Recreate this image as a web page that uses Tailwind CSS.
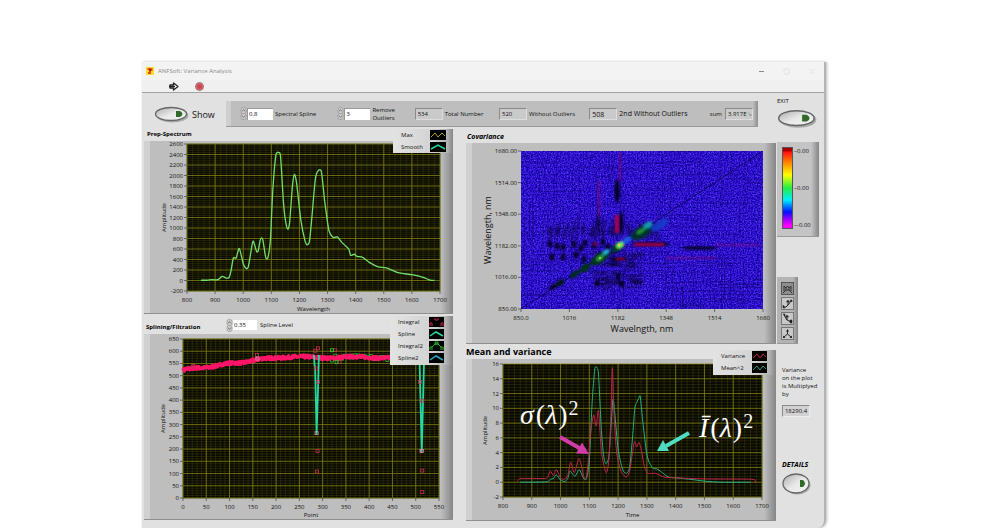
<!DOCTYPE html>
<html lang="en">
<head>
  <meta charset="UTF-8" />
  <title>ANFSoft: Variance Analysis</title>
  <script src="https://cdn.jsdelivr.net/npm/@tailwindcss/browser@4"></script>
</head>
<body class="bg-white min-h-screen pt-[62px] font-['Open_Sans',sans-serif] text-[6px] leading-[8px] font-medium text-[#111]">
  <div class="w-[68.4%] ml-[14.2%] bg-[#e1e1e1] border-r-2 border-[#b4b4b4] rounded-br-lg shadow-[1px_0_3px_#bbb]">
    <!-- Title bar -->
    <header class="bg-[#f3f3f3]">
      <div class="h-[18px] flex items-center pl-1 pr-[9px] gap-1">
        <svg class="w-2 h-2" viewBox="0 0 8 8"><rect width="8" height="8" fill="#f8e02a" /><path d="M1.500 1h5v3H5v3H2V5h1V3H1.500z" fill="#e8481c" /><path d="M3 2h2v2H3z" fill="#b01c10" /></svg>
        <h1 class="flex-1 text-[#8a8a8a]">ANFSoft: Variance Analysis</h1>
        <div class="flex gap-[18px]">
          <button aria-label="Minimize"><svg class="w-[7px] h-[7px]" viewBox="0 0 7 7"><path d="M1 3.500h5" stroke="#888" /></svg></button>
          <button aria-label="Maximize"><svg class="w-[7px] h-[7px]" viewBox="0 0 7 7"><rect x="1" y="1" width="5" height="5" rx="1" fill="none" stroke="#e2e2e2" /></svg></button>
          <button aria-label="Close"><svg class="w-[7px] h-[7px]" viewBox="0 0 7 7"><path d="M1 1l5 5M6 1L1 6" stroke="#e2e2e2" /></svg></button>
        </div>
      </div>
      <div class="h-[13px] flex items-center pl-[27px] gap-4 bg-[#f0f0f0] border-b border-[#a2a2a2]">
        <button aria-label="Run"><svg class="w-[10px] h-[9px]" viewBox="0 0 10 9"><path d="M1 3h3.500V1L9 4.500L4.500 8V6H1z" fill="#fff" stroke="#222" stroke-width="1.300" stroke-linejoin="round" /><path d="M0 4.500h6" stroke="#222" stroke-width="1.500" /></svg></button>
        <button aria-label="Abort"><svg class="w-[9px] h-[9px]" viewBox="0 0 9 9"><circle cx="4.500" cy="4.500" r="4.300" fill="#8e5358" /><circle cx="4.500" cy="4.500" r="3.200" fill="#cf4650" stroke="#e0aaae" stroke-width=".5" /></svg></button>
      </div>
    </header>

    <!-- Controls -->
    <div class="h-9 flex items-start pl-3">
      <label class="w-[72px] mt-[13px] flex items-center gap-[3px] text-[9px] font-normal">
        <button class="w-[35px]" aria-label="Show"><svg class="w-full h-auto" viewBox="0 0 35 17"><use href="#oval" /></svg></button>
        Show
      </label>
      <div class="flex-1 mt-2 h-[26px] grid grid-cols-[97fr_77fr_84fr_90fr_120fr_48fr] items-center pl-[14px] bg-[linear-gradient(90deg,#cfcfcf_0_5px,#bebebe_5px_calc(100%-5px),#8c8c8c)] border-b border-[#999]">
        <label class="flex items-center gap-[2px]">
          <span class="flex items-center"><svg class="w-[7px] h-[13px]" viewBox="0 0 7 13"><use href="#spin" /></svg><input class="w-[26px] h-3 bg-white border-t border-l border-[#999] text-[6px] pl-px" value="0.8" /></span>
          Spectral Spline
        </label>
        <label class="flex items-center gap-[2px]">
          <span class="flex items-center"><svg class="w-[7px] h-[13px]" viewBox="0 0 7 13"><use href="#spin" /></svg><input class="w-[26px] h-3 bg-white border-t border-l border-[#999] text-[6px] pl-px" value="3" /></span>
          <span>Remove<br />Outliers</span>
        </label>
        <label class="flex items-center gap-[2px]"><output class="w-7 h-3 pl-[2px] leading-[11px] bg-[#cacaca] border border-t-[#8a8a8a] border-l-[#8a8a8a] border-[#ddd]">534</output>Total Number</label>
        <label class="flex items-center gap-[2px]"><output class="w-7 h-3 pl-[2px] leading-[11px] bg-[#cacaca] border border-t-[#8a8a8a] border-l-[#8a8a8a] border-[#ddd]">520</output>Without Outliers</label>
        <label class="flex items-center gap-[2px] text-[7px] font-normal"><output class="w-7 h-3 pl-[2px] leading-[11px] bg-[#cacaca] border border-t-[#8a8a8a] border-l-[#8a8a8a] border-[#ddd]">508</output>2nd Without Outliers</label>
        <label class="flex items-center gap-[3px]">sum<output class="w-7 h-3 pl-[2px] leading-[11px] overflow-hidden whitespace-nowrap bg-[#cacaca] border border-t-[#8a8a8a] border-l-[#8a8a8a] border-[#ddd]">3.917E<span class="text-[#777]">↘</span></output></label>
      </div>
      <label class="w-[66px] pl-[19px] pt-1">
        EXIT
        <button class="block w-[40px] mt-1" aria-label="Exit"><svg class="w-full h-auto" viewBox="0 0 35 17"><use href="#oval" /></svg></button>
      </label>
    </div>

    <main class="grid grid-cols-[322fr_311fr_47fr] pl-[2px] pb-[7px]">
      <!-- Left charts -->
      <div class="pr-[13px]">
        <section class="relative">
          <h2 class="h-3 pl-[3px] pt-px font-bold text-black">Prep-Spectrum</h2>
          <svg id="spectrum" class="block w-full h-auto bg-[linear-gradient(90deg,#d0d0d0_0_6px,#bebebe_6px_calc(100%-12px),#858585)] border-b border-[#909090]" viewBox="0 0 309 172"></svg>
          <ul class="absolute top-0 right-0 w-[60px] h-6 pl-2 pr-[7px] bg-[linear-gradient(90deg,#e3e3e3,#d2d2d2_40px,#b4b4b4_54px,#858585)]">
            <li class="h-3 flex items-center justify-between">Max<svg class="w-4 h-[10px] bg-black" viewBox="0 0 16 10"><path d="M1 7l4-4l3 4l4-4l3 3" fill="none" stroke="#b5a520" /></svg></li>
            <li class="h-3 flex items-center justify-between">Smooth<svg class="w-4 h-[10px] bg-black" viewBox="0 0 16 10"><path d="M1 7L8 3l7 4" fill="none" stroke="#25d8a4" stroke-width="1.500" /></svg></li>
          </ul>
        </section>
        <section class="relative pt-[2px]">
          <div class="h-[18px] flex items-center">
            <h2 class="w-[82px] pl-[2px] pt-1 font-bold text-black">Splining/Filtration</h2>
            <label class="flex items-center gap-[3px]">
              <span class="flex items-center"><svg class="w-[7px] h-[13px]" viewBox="0 0 7 13"><use href="#spin" /></svg><input class="w-6 h-[10px] bg-white text-[6px] pl-px" value="0.35" /></span>
              Spline Level
            </label>
          </div>
          <svg id="filtration" class="block w-full h-auto bg-[linear-gradient(90deg,#d0d0d0_0_6px,#bebebe_6px_calc(100%-12px),#858585)] border-b border-[#909090]" viewBox="0 0 309 185"></svg>
          <ul class="absolute top-[2px] right-0 w-[63px] h-[49px] pl-2 pr-[9px] bg-[linear-gradient(90deg,#e3e3e3,#d2d2d2_42px,#b4b4b4_56px,#858585)]">
            <li class="h-3 flex items-center justify-between">Integral<svg class="w-[15px] h-[10px] bg-black" viewBox="0 0 15 10"><path d="M1 9V6h2v3M6 1v2h3V1M12 9V6h2v3" fill="none" stroke="#d0224c" /></svg></li>
            <li class="h-3 flex items-center justify-between">Spline<svg class="w-[15px] h-[10px] bg-black" viewBox="0 0 15 10"><path d="M1 7l6-4l7 4" fill="none" stroke="#25d8a4" stroke-width="1.500" /></svg></li>
            <li class="h-3 flex items-center justify-between">Integral2<svg class="w-[15px] h-[10px] bg-black" viewBox="0 0 15 10"><path d="M1 9V6h2v3M3 6l3-3h3l3 3M6 1v2h3V1zM12 9V6h2v3" fill="none" stroke="#24b824" /></svg></li>
            <li class="h-3 flex items-center justify-between">Spline2<svg class="w-[15px] h-[10px] bg-black" viewBox="0 0 15 10"><path d="M1 7l6-4l7 4" fill="none" stroke="#2fa8c8" stroke-width="1.500" /></svg></li>
          </ul>
        </section>
      </div>

      <!-- Right charts -->
      <div class="pr-px">
        <section>
          <h2 class="h-[14px] pl-px pt-1 text-[7px] font-bold italic text-black">Covariance</h2>
          <svg id="covariance" class="block w-full h-auto bg-[linear-gradient(90deg,#d0d0d0_0_6px,#bebebe_6px_calc(100%-12px),#858585)] border-b border-[#909090]" viewBox="0 0 310 200"></svg>
        </section>
        <section class="relative">
          <h2 class="h-[15px] pt-1 text-[9px] font-bold text-black">Mean and variance</h2>
          <svg id="variance" class="block w-full h-auto bg-[linear-gradient(90deg,#d0d0d0_0_6px,#bebebe_6px_calc(100%-12px),#858585)] border-b border-[#909090]" viewBox="0 0 310 161"></svg>
          <ul class="absolute top-[6px] right-0 w-[63px] h-[25px] pl-2 pr-[9px] bg-[linear-gradient(90deg,#e3e3e3,#d2d2d2_42px,#b4b4b4_56px,#858585)]">
            <li class="h-3 flex items-center justify-between">Variance<svg class="w-[15px] h-[10px] bg-black" viewBox="0 0 15 10"><path d="M1 7l4-4l3 4l3-4l3 3" fill="none" stroke="#b82048" /></svg></li>
            <li class="h-3 flex items-center justify-between">Mean^2<svg class="w-[15px] h-[10px] bg-black" viewBox="0 0 15 10"><path d="M1 7l4-4l3 4l3-4l3 3" fill="none" stroke="#1f9c80" /></svg></li>
          </ul>
        </section>
      </div>

      <!-- Side tools -->
      <aside class="pt-[13px]">
        <div class="w-[42px] h-[95px] pl-[5px] pt-[5px] flex gap-px bg-[linear-gradient(90deg,#c4c4c4_0_34px,#858585)] border-b border-[#999]">
          <div class="w-[11px] h-[82px] border border-[#555] bg-[linear-gradient(180deg,#a00_0_3px,#f11_4px,#f80_15px,#ff0_27px,#2e4_40px,#0ef_52px,#01f_64px,#a0f_72px,#f0f_78px)]"></div>
          <div class="h-[82px] flex flex-col justify-between whitespace-nowrap"><span>–0.00</span><span>–0.00</span><span>–-0.00</span></div>
        </div>
        <div class="w-[21px] h-[67px] mt-10 pl-1 pt-[5px] flex flex-col gap-[2px] bg-[linear-gradient(90deg,#b4b4b4_0_16px,#858585)] border-b border-[#999]">
          <button class="size-[13px] border border-[#555] bg-[#8e8e8e]" aria-label="Perspective view"><svg viewBox="0 0 11 11"><path d="M1 10l3-3h3l3 3M2 8V3l2 2l1.500-2L7 5l2-2v5M4 7V5M7 7V5" fill="none" stroke="#2a2a2a" stroke-width=".9" /></svg></button>
          <button class="size-[13px] border border-[#777] bg-[#c8c8c8]" aria-label="XZ view"><svg viewBox="0 0 11 11"><path d="M1 9h3l2-2V3M4 9l2-2l3-4" fill="none" stroke="#222" /><path d="M4.500 4L6 2l1.500 2zM1 7v3h2zM8 2h2v2z" fill="#222" stroke="#222" stroke-width=".5" /></svg></button>
          <button class="size-[13px] border border-[#777] bg-[#c8c8c8]" aria-label="YZ view"><svg viewBox="0 0 11 11"><path d="M5 3v4l4 2M2 2l3 5" fill="none" stroke="#222" /><path d="M3.500 4L5 2l1.500 2zM1 1h2v2zM8 7v3h2V7z" fill="#222" stroke="#222" stroke-width=".5" /></svg></button>
          <button class="size-[13px] border border-[#777] bg-[#c8c8c8]" aria-label="XY view"><svg viewBox="0 0 11 11"><path d="M5.500 2v4L2 9M5.500 6L9 9" fill="none" stroke="#222" /><path d="M4 3.500L5.500 1L7 3.500zM1 7.500V10h2.500zM10 7.500V10H7.500z" fill="#222" /></svg></button>
        </div>
        <div class="pl-[5px] pt-[22px]">
          <label>Variance<br />on the plot<br />is Multiplyed<br />by
            <output class="block w-7 h-3 mt-[7px] leading-[11px] text-center bg-[#d2d2d2] border border-t-[#8a8a8a] border-l-[#8a8a8a] border-[#eee]">18290.4</output>
          </label>
          <label class="block mt-11 text-[7px] font-bold italic text-black">DETAILS
            <button class="block w-[29px] mt-1" aria-label="Details"><svg class="w-full h-auto" viewBox="0 0 29 22"><ellipse cx="15.500" cy="12" rx="13" ry="9.500" fill="#aaa" /><ellipse cx="14" cy="10.500" rx="13" ry="9.500" fill="url(#knob)" stroke="#666" stroke-width="1.300" /><path d="M18 7h3q4 3.500 0 7h-3z" fill="#2f6a28" /></svg></button>
          </label>
        </div>
      </aside>
    </main>
  </div>

  <!-- Shared symbols -->
  <svg class="absolute w-0 h-0">
    <defs>
      <linearGradient id="knob" x1="0" y1="0" x2="1" y2="1"><stop offset="0" stop-color="#aaa" /><stop offset=".5" stop-color="#e8e8e8" /><stop offset="1" stop-color="#f4f4f4" /></linearGradient>
      <g id="oval">
        <ellipse cx="18.500" cy="9.500" rx="16" ry="7" fill="#aaa" />
        <ellipse cx="17" cy="8" rx="15.500" ry="6.500" fill="url(#knob)" stroke="#666" stroke-width="1.300" />
        <path d="M22 5h4q5 3 0 6h-4z" fill="#2f6a28" />
      </g>
      <g id="spin">
        <rect x="1" y="0.500" width="5" height="6" rx="2" fill="#ccc" stroke="#999" stroke-width=".7" />
        <rect x="1" y="6.500" width="5" height="6" rx="2" fill="#ccc" stroke="#999" stroke-width=".7" />
        <path d="M2 4.500l1.500-2L5 4.500M2 8.500l1.500 2L5 8.500" fill="none" stroke="#666" stroke-width=".8" />
      </g>
      <filter id="noise" x="0" y="0" width="1" height="1" color-interpolation-filters="sRGB">
        <feTurbulence type="fractalNoise" baseFrequency="0.7" numOctaves="2" seed="4" />
        <feColorMatrix values="0.7 0 0 0 -0.15  0.5 0 0 0 -0.17  0.8 0 0 0 0.44  0 0 0 0 1" />
      </filter>
      <filter id="soft"><feGaussianBlur stdDeviation="1" /></filter>
      <clipPath id="mapClip"><rect x="55" y="8" width="242" height="158" /></clipPath>
    </defs>
  </svg>

  <script>
    const NS = "http://www.w3.org/2000/svg";

    function add(parent, tag, attrs, text) {
      const node = document.createElementNS(NS, tag);
      for (const key in attrs) node.setAttribute(key, attrs[key]);
      if (text !== undefined) node.textContent = text;
      parent.appendChild(node);
      return node;
    }

    // Draws background, grid and axes, and returns the two scales
    function drawAxes(id, o) {
      const svg = document.getElementById(id);
      const x = (v) => o.left + ((v - o.xMin) / (o.xMax - o.xMin)) * o.width;
      const y = (v) => o.top + o.height - ((v - o.yMin) / (o.yMax - o.yMin)) * o.height;
      const right = o.left + o.width;
      const bottom = o.top + o.height;

      add(svg, "rect", { x: o.left, y: o.top, width: o.width, height: o.height, fill: "#080800" });
      if (o.grid) {
        let minor = "";
        let major = "";
        for (let v = o.xMin; v <= o.xMax; v += o.xStep / 5) minor += `M${x(v)} ${o.top}V${bottom}`;
        for (let v = o.yMin; v <= o.yMax; v += o.yStep / 5) minor += `M${o.left} ${y(v)}H${right}`;
        for (let v = o.xMin; v <= o.xMax; v += o.xStep) major += `M${x(v)} ${o.top}V${bottom}`;
        for (let v = o.yMin; v <= o.yMax; v += o.yStep) major += `M${o.left} ${y(v)}H${right}`;
        add(svg, "path", { d: minor, stroke: "#38380a", "stroke-width": 0.6 });
        add(svg, "path", { d: major, stroke: "#7c7c14", "stroke-width": 0.8 });
      }
      for (let v = o.xMin; v <= o.xMax; v += o.xStep) {
        add(svg, "path", { d: `M${x(v)} ${bottom}v3`, stroke: "#444", "stroke-width": 0.7 });
        add(svg, "text", { x: x(v), y: bottom + 11, "text-anchor": "middle", class: "text-[6px]", fill: "#111" }, v === 850 ? "850.0" : v);
      }
      for (let v = o.yMin; v <= o.yMax; v += o.yStep) {
        add(svg, "path", { d: `M${o.left} ${y(v)}h-3`, stroke: "#444", "stroke-width": 0.7 });
        add(svg, "text", { x: o.left - 4, y: y(v) + 2, "text-anchor": "end", class: "text-[6px]", fill: "#111" }, o.decimals ? v.toFixed(o.decimals) : v);
      }
      const size = o.bigLabels ? "text-[9px] font-normal" : "text-[6px]";
      const mid = o.top + o.height / 2;
      add(svg, "text", { x: o.left + o.width / 2, y: o.xLabelY, "text-anchor": "middle", class: size, fill: "#111" }, o.xLabel);
      add(svg, "text", { transform: `translate(${o.yLabelX} ${mid}) rotate(-90)`, "text-anchor": "middle", class: size, fill: "#111" }, o.yLabel);
      return { svg, x, y };
    }

    function drawLine(c, points, color, width) {
      const list = points.map(([a, b]) => `${c.x(a).toFixed(2)},${c.y(b).toFixed(2)}`).join(" ");
      return add(c.svg, "polyline", { points: list, fill: "none", stroke: color, "stroke-width": width, "stroke-linejoin": "round" });
    }

    // Smooth curve through the points
    function drawCurve(c, points, color, width) {
      const p = points.map(([a, b]) => [c.x(a), c.y(b)]);
      let d = `M${p[0][0]} ${p[0][1]}`;
      for (let i = 0; i < p.length - 1; i++) {
        const before = p[i - 1] || p[i];
        const after = p[i + 2] || p[i + 1];
        d += `C${p[i][0] + (p[i + 1][0] - before[0]) / 8} ${p[i][1] + (p[i + 1][1] - before[1]) / 8}`;
        d += ` ${p[i + 1][0] - (after[0] - p[i][0]) / 8} ${p[i + 1][1] - (after[1] - p[i][1]) / 8}`;
        d += ` ${p[i + 1][0]} ${p[i + 1][1]}`;
      }
      add(c.svg, "path", { d, fill: "none", stroke: color, "stroke-width": width });
    }

    // Repeatable pseudo random numbers
    let seed = 7;
    function rand() {
      seed = (seed * 16807) % 2147483647;
      return seed / 2147483647;
    }

    // Prep-Spectrum
    const spectrum = drawAxes("spectrum", {
      left: 43, top: 3, width: 253, height: 147, xMin: 800, xMax: 1700, xStep: 100,
      yMin: -200, yMax: 2600, yStep: 200, grid: true,
      xLabel: "Wavelength", xLabelY: 170, yLabel: "Amplitude", yLabelX: 22
    });
    const smooth = [[850,5],[870,5],[890,15],[910,15],[925,80],[940,45],[950,60],[957,200],[965,430],[975,430],[986,610],
      [1000,320],[1010,230],[1018,260],[1026,500],[1035,750],[1047,560],[1053,560],[1060,760],[1065,810],[1070,770],[1080,440],[1088,440],
      [1097,800],[1105,1700],[1115,2350],[1121,2435],[1127,2435],[1133,2350],[1143,1500],[1150,1150],[1158,980],[1165,1100],[1175,1800],[1182,2020],
      [1190,1850],[1205,1150],[1220,750],[1228,680],[1236,760],[1245,1250],[1258,1980],[1277,2090],[1290,1500],[1305,950],[1320,820],
      [1335,830],[1350,730],[1375,600],[1382,480],[1395,500],[1405,460],[1425,440],[1450,340],[1480,260],[1510,240],[1550,150],
      [1600,110],[1640,60],[1665,5],[1680,5]];
    drawCurve(spectrum, smooth, "#74e06c", 1.3);

    // Splining/Filtration
    const filt = drawAxes("filtration", {
      left: 39, top: 5, width: 256, height: 159, xMin: 0, xMax: 550, xStep: 50,
      yMin: 0, yMax: 650, yStep: 50, grid: true,
      xLabel: "Point", xLabelY: 183, yLabel: "Amplitude", yLabelX: 21
    });
    function level(p) {
      if (p < 200) return 522 + (p / 200) * 53 + 3 * Math.sin(p / 12);
      return 575 + 3 * Math.sin(p / 18);
    }
    const square = (a, b, color) => add(filt.svg, "rect", { x: filt.x(a) - 1.5, y: filt.y(b) - 1.5, width: 3, height: 3, fill: "none", stroke: color, "stroke-width": 0.8 });
    for (let p = 320; p < 450; p += 7) square(p, level(p) - 10 + rand() * 20, "#2fb830");
    const integral = [];
    for (let p = 0; p <= 534; p += 1) integral.push([p, level(p) + (rand() - 0.5) * 12]);
    drawLine(filt, integral, "#ff1468", 3.4);
    drawLine(filt, [[281,585],[284,520],[287,265],[290,440],[292,585]], "#25d8a4", 1.8);
    drawLine(filt, [[508,580],[510,420],[513,192],[516,420],[518,580]], "#25d8a4", 1.8);
    [[22,540],[159,585],[284,602],[290,612],[286,530],[290,475],[289,192],[288,108],[327,604],[336,556],[509,475],[514,398],[512,192],[514,112],[514,24]]
      .forEach(([a, b]) => square(a, b, "#c83055"));
    [[287,265],[513,192],[160,570]].forEach(([a, b]) => square(a, b, "#c9a0b0"));
    [[320,604],[330,555]].forEach(([a, b]) => square(a, b, "#2fd030"));

    // Covariance map
    const cov = drawAxes("covariance", {
      left: 55, top: 8, width: 242, height: 158, xMin: 850, xMax: 1680, xStep: 166,
      yMin: 850, yMax: 1680, yStep: 166, decimals: 2, bigLabels: true,
      xLabel: "Wavelngth, nm", xLabelY: 189, yLabel: "Wavelength, nm", yLabelX: 25
    });
    const map = add(cov.svg, "g", { "clip-path": "url(#mapClip)" });
    add(map, "rect", { x: 55, y: 8, width: 242, height: 158, filter: "url(#noise)" });
    // Fine weave over the whole map
    let weave = "";
    for (let a = 55; a < 297; a += 3) weave += `M${a} 8v158`;
    for (let b = 8; b < 166; b += 4) weave += `M55 ${b}h242`;
    add(map, "path", { d: weave, stroke: "#0c0068", "stroke-width": 0.6, opacity: 0.4 });
    for (let i = 0; i < 160; i++) {
      const a = 45 + rand() * 252;
      const b = rand() * 166;
      const len = 15 + rand() * 50;
      add(map, "path", { d: i % 2 ? `M${a} ${b}h${len}` : `M${a} ${b}v${len}`, stroke: "#060050", "stroke-width": 0.6, opacity: 0.5 });
    }
    // Streaks around the diagonal peaks
    const dark = add(map, "g", { filter: "url(#soft)", fill: "#02001c" });
    for (let i = 0; i < 50; i++) {
      const a = 82 + rand() * 110;
      add(dark, "ellipse", { cx: a, cy: 80 + rand() * 14, rx: 0.9, ry: 3 + rand() * 5, opacity: 0.55 });
      add(dark, "ellipse", { cx: 128 + rand() * 45, cy: 108 + rand() * 38, rx: 3 + rand() * 6, ry: 0.8, opacity: 0.65 });
    }
    [[84,101],[91,103],[97,104],[108,101],[115,105],[119,100],[128,102],[137,99],[142,104],[86,114],[97,114],[110,112],[118,116],[131,140],[152,134],[156,141]]
      .forEach(([cx, cy]) => add(dark, "ellipse", { cx, cy, rx: 2.5, ry: 3.5, opacity: 0.9 }));
    add(dark, "ellipse", { cx: 151, cy: 48, rx: 2.5, ry: 12 });
    add(dark, "ellipse", { cx: 155, cy: 80, rx: 2, ry: 12 });
    add(dark, "ellipse", { cx: 132, cy: 80, rx: 1.5, ry: 10, opacity: 0.7 });
    add(dark, "ellipse", { cx: 185, cy: 101, rx: 19, ry: 2 });
    add(dark, "ellipse", { cx: 234, cy: 105, rx: 18, ry: 1.6 });
    add(dark, "ellipse", { cx: 152, cy: 116, rx: 9, ry: 2 });
    const red = add(map, "g", { filter: "url(#soft)", fill: "#a80050" });
    add(red, "rect", { x: 149, y: 72, width: 4, height: 18 });
    add(red, "rect", { x: 153, y: 10, width: 2, height: 28, opacity: 0.5 });
    add(red, "rect", { x: 132, y: 38, width: 2, height: 35, opacity: 0.5 });
    add(red, "rect", { x: 168, y: 100, width: 30, height: 3 });
    add(red, "rect", { x: 250, y: 101, width: 45, height: 2, opacity: 0.4 });
    add(red, "rect", { x: 200, y: 114, width: 50, height: 2, opacity: 0.4 });
    add(red, "rect", { x: 150, y: 115, width: 9, height: 2 });
    add(red, "rect", { x: 127, y: 100, width: 5, height: 2 });
    add(map, "path", { d: "M55 166L297 8", stroke: "#05003c", "stroke-width": 0.8, opacity: 0.85 });
    const glow = add(map, "g", { filter: "url(#soft)" });
    [[87,144,4,2,"#020218"],[94,140,5,3,"#02181c"],[109,131,6,3,"#032a24"],[119,125,6,4,"#043020"],[134,115,11,5,"#04391c"],
      [134,115,4,2,"#35a040"],[140,109,4,2,"#20b0d0"],[152,104,8,4,"#043a28"],[154,102,4,3,"#6fe860"],[161,97,5,3,"#1a58e0"],
      [176,89,12,6,"#04332c"],[175,88,5,2,"#258a3c"],[182,82,5,3,"#1898b0"],[194,82,10,4,"#1838c8"]]
      .forEach(([cx, cy, rx, ry, fill]) => add(glow, "ellipse", { cx, cy, rx, ry, fill, transform: `rotate(-33 ${cx} ${cy})` }));
    add(map, "circle", { cx: 153, cy: 102, r: 1.2, fill: "#f8c850" });
    add(map, "circle", { cx: 134, cy: 115, r: 1, fill: "#a8d850" });

    // Mean and variance
    const mv = drawAxes("variance", {
      left: 37, top: 5, width: 259, height: 133, xMin: 800, xMax: 1700, xStep: 100,
      yMin: -2, yMax: 16, yStep: 2, grid: true,
      xLabel: "Time", xLabelY: 158, yLabel: "Amplitude", yLabelX: 21
    });
    drawCurve(mv, [[860,0],[950,0.05],[965,0.4],[975,0.5],[985,1],[1000,0.3],[1015,0.1],[1025,0.5],[1033,1.5],[1050,0.8],[1065,1.7],
      [1080,0.5],[1090,0.5],[1100,3],[1110,11],[1118,15],[1122,15.6],[1127,15.5],[1132,14.5],[1142,7],[1150,3.5],[1158,2.5],[1168,3.5],[1176,8],
      [1182,11.2],[1188,9.5],[1200,4.5],[1215,1.8],[1228,1.2],[1240,2],[1250,6],[1258,10],[1265,10.8],[1272,11.4],[1277,11.6],[1285,8.5],
      [1297,4.5],[1305,3],[1320,1.9],[1335,1.8],[1350,1.4],[1375,0.7],[1400,0.6],[1450,0.4],[1500,0.15],[1560,0],[1660,0]], "#24b287", 1);
    drawCurve(mv, [[850,0.1],[862,0.5],[945,0.5],[955,0.7],[965,1.5],[975,0.9],[985,1.7],[1000,0.6],[1012,0.4],[1025,0.9],[1035,2.7],
      [1048,1.3],[1065,3.2],[1082,0.6],[1090,0.8],[1098,3.5],[1105,7],[1115,9.1],[1124,7.6],[1132,9.7],[1142,4.2],[1158,1.3],[1168,3],
      [1175,9],[1180,15.5],[1186,9],[1195,4],[1210,1.5],[1228,0.7],[1240,1.5],[1250,4],[1257,5.5],[1265,4.8],[1272,5.4],[1280,4.5],
      [1292,2],[1305,1.2],[1330,1.2],[1360,0.7],[1400,0.6],[1500,0.45],[1665,0.4],[1675,0],[1680,0]], "#c4244f", 1);

    // Formula labels and their arrows
    function formula(x, y, symbol) {
      const text = add(mv.svg, "text", { x, y, fill: "#fff", class: "font-['Liberation_Serif',serif] font-normal italic text-[28px]" });
      add(text, "tspan", {}, symbol);
      add(text, "tspan", { class: "not-italic", dx: 2 }, "(");
      add(text, "tspan", {}, "λ");
      add(text, "tspan", { class: "not-italic", dx: 1 }, ")");
      add(text, "tspan", { class: "not-italic text-[20px]", dx: 1, dy: -9 }, "2");
    }
    formula(54, 65, "σ");
    formula(233, 78, "Ī");
    add(mv.svg, "path", { d: "M94 78L115 90", stroke: "#d13da8", "stroke-width": 4 });
    add(mv.svg, "path", { d: "M123 95L110 94.500L116 83.500z", fill: "#d13da8" });
    add(mv.svg, "path", { d: "M223 74L200 87", stroke: "#4fdcc0", "stroke-width": 4 });
    add(mv.svg, "path", { d: "M191 92L197 81L203 92z", fill: "#4fdcc0" });
  </script>
</body>
</html>
